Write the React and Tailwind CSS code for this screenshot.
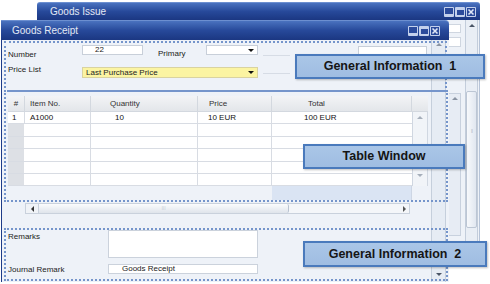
import React from "react";

const TriDown = ({ c = "border-t-[#111]" }) => (
  <div className={`w-0 h-0 border-l-[3px] border-r-[3px] border-t-[3px] border-l-transparent border-r-transparent ${c}`} />
);
const TriUp = ({ c = "border-b-[#8a94a3]" }) => (
  <div className={`w-0 h-0 border-l-[3px] border-r-[3px] border-b-[3px] border-l-transparent border-r-transparent ${c}`} />
);
const TriLeft = () => (
  <div className="w-0 h-0 border-t-[3px] border-b-[3px] border-r-[3px] border-t-transparent border-b-transparent border-r-[#333]" />
);
const TriRight = () => (
  <div className="w-0 h-0 border-t-[3px] border-b-[3px] border-l-[3px] border-t-transparent border-b-transparent border-l-[#555]" />
);

function WinButtons() {
  return (
    <div className="flex gap-[1px]">
      <div className="w-[10px] h-[10px] bg-[#c4d1ec] pt-[1px] px-[1px] pb-[3px] rounded-[1px]">
        <div className="w-full h-full bg-[#2b4b9c]" />
      </div>
      <div className="w-[10px] h-[10px] bg-[#c4d1ec] pt-[3px] px-[1.5px] pb-[1.5px] rounded-[1px]">
        <div className="w-full h-full bg-[#2b4b9c]" />
      </div>
      <div className="w-[10px] h-[10px] bg-[#c4d1ec] rounded-[1px] flex items-center justify-center">
        <svg width="8" height="8" viewBox="0 0 8 8">
          <rect width="8" height="8" fill="#2b4b9c" />
          <path d="M1.5 1.5 L6.5 6.5 M6.5 1.5 L1.5 6.5" stroke="#dfe7f7" strokeWidth="1.6" />
        </svg>
      </div>
    </div>
  );
}

const titleBar =
  "bg-gradient-to-b from-[#4a72bf] via-[#27499a] to-[#1b3782] border-t border-[#6c8fd0]";

function BackWindow() {
  return (
    <div className="absolute left-[37px] top-[2px] w-[443px] h-[240px] flex flex-col">
      <div className={`h-[18px] flex items-center justify-between pl-[13px] pr-[4px] rounded-t-[3px] ${titleBar}`}>
        <span className="text-[10px] leading-none text-[#e3e9f5]">Goods Issue</span>
        <WinButtons />
      </div>
      <div className="flex-1 bg-[#eef2f8] border-r border-[#b7c4d8] flex justify-end gap-[4px] pr-[1px]">
        <div className="w-[40px] flex flex-col items-end pt-[4px]">
          <div className="w-full h-[9px] bg-white border border-[#cfd6e0]" />
          <div className="w-full h-[10px] mt-[4px] bg-white border border-[#cfd6e0]" />
          <div className="w-[13px] flex-1 mt-[46px] mb-[6px] bg-[#e7ecf4] border border-[#c8d1de] flex flex-col items-center pt-[3px]">
            <TriUp />
          </div>
        </div>
        <div className="w-[13px] bg-[#e9eef5] border-x border-[#c3cddb] flex flex-col items-center pt-[4px]">
          <TriUp c="border-b-[#4a5566]" />
          <div className="w-[11px] mt-[64px] h-[137px] rounded-[2px] bg-gradient-to-r from-[#f7f9fc] to-[#e1e7f0] border border-[#bcc6d4] flex flex-col items-center pt-[36px]">
            <div className="text-[6px] leading-none text-[#9aa4b2] tracking-[-1px]">⁞⁞</div>
          </div>
        </div>
      </div>
    </div>
  );
}

const colW = ["w-[17px]", "w-[66px]", "w-[107px]", "w-[74px]", "w-[140px]"];

function Table() {
  const rowH = ["h-[12px]", "h-[13px]", "h-[12px]", "h-[13px]", "h-[12px]", "h-[12px]"];
  return (
    <div className="flex flex-col w-[420px] mt-[18px]">
      <div className="flex h-[16px] bg-gradient-to-b from-[#f3f4f6] to-[#e3e6ea] border-b border-[#d3d8df] text-[8px] leading-none text-[#333]">
        <div className={`${colW[0]} border-r border-[#d3d8df] flex items-center justify-center`}>#</div>
        <div className={`${colW[1]} border-r border-[#d3d8df] flex items-center pl-[5px]`}>Item No.</div>
        <div className={`${colW[2]} border-r border-[#d3d8df] flex items-center pl-[19px]`}>Quantity</div>
        <div className={`${colW[3]} border-r border-[#d3d8df] flex items-center pl-[11px]`}>Price</div>
        <div className={`${colW[4]} border-r border-[#d3d8df] flex items-center pl-[36px]`}>Total</div>
        <div className="w-[16px]" />
      </div>
      <div className="flex">
        <div className="w-[404px] flex flex-col">
          {rowH.map((h, i) => (
            <div key={i} className={`flex ${h} border-b border-[#d8dce3] bg-white text-[8px] leading-none text-[#111]`}>
              <div className={`${colW[0]} border-r border-[#d8dce3] flex items-center pl-[4px] ${i === 0 ? "bg-white" : "bg-[#dde0e5] border-r-white"}`}>
                {i === 0 ? "1" : ""}
              </div>
              <div className={`${colW[1]} border-r border-[#d8dce3] flex items-center pl-[5px]`}>{i === 0 ? "A1000" : ""}</div>
              <div className={`${colW[2]} border-r border-[#d8dce3] flex items-center pl-[24px]`}>{i === 0 ? "10" : ""}</div>
              <div className={`${colW[3]} border-r border-[#d8dce3] flex items-center pl-[10px]`}>{i === 0 ? "10 EUR" : ""}</div>
              <div className={`${colW[4]} flex items-center pl-[32px]`}>{i === 0 ? "100 EUR" : ""}</div>
            </div>
          ))}
          <div className="h-[14px] flex">
            <div className="w-[264px]" />
            <div className="w-[140px] bg-[#dae4f3] border-r border-[#cdd6e4]" />
          </div>
        </div>
        <div className="w-[16px] h-[74px] bg-[#f1f4f8] border-x border-[#d0d7e1] flex flex-col items-center justify-between pt-[4px] pb-[9px]">
          <TriUp c="border-b-[#a5aeba]" />
          <TriDown c="border-t-[#a5aeba]" />
        </div>
      </div>
    </div>
  );
}

function HScroll() {
  return (
    <div className="ml-[17px] mt-[3px] w-[385px] h-[11px] flex bg-[#f4f6f9] border border-[#c9d1dc]">
      <div className="w-[13px] flex items-center justify-center border-r border-[#c9d1dc] bg-[#f0f3f7]">
        <TriLeft />
      </div>
      <div className="w-[250px] bg-gradient-to-b from-[#fbfcfd] to-[#dfe4eb] border-r border-[#b9c3d1] rounded-r-[2px] flex items-center justify-center">
        <span className="text-[5px] leading-none text-[#a0a8b5]">⁞⁞⁞</span>
      </div>
      <div className="flex-1 flex items-center justify-end pr-[3px]">
        <TriRight />
      </div>
    </div>
  );
}

function FrontWindow() {
  return (
    <div className="absolute left-[1px] top-[20px] w-[448px] h-[262px] flex flex-col">
      <div className={`h-[20px] flex items-center justify-between pl-[11px] pr-[9px] rounded-tr-[4px] ${titleBar}`}>
        <span className="text-[10px] leading-none text-[#e3e9f5]">Goods Receipt</span>
        <WinButtons />
      </div>
      <div className="flex-1 flex bg-[#eef2f8] border-l border-[#1e3c88]">
        <div className="w-[429px] flex flex-col pl-[6px] pt-[5px] text-[8px] leading-[10px] text-[#222]">
          <div className="flex h-[13px]">
            <div className="w-[74px] pt-[5px]">Number</div>
            <div className="w-[61px] h-[10px] bg-white border border-[#c8cfd9] pl-[12px] leading-[8px]">22</div>
            <div className="w-[48px] ml-[15px] pt-[4px]">Primary</div>
            <div className="w-[52px] h-[10px] bg-white border border-[#c8cfd9] flex items-center justify-end pr-[3px]">
              <TriDown />
            </div>
            <div className="w-[27px] h-[1px] ml-[5px] mt-[10px] bg-[#d6dce5]" />
            <div className="w-[69px] h-[9px] ml-[68px] mt-[1px] bg-white border border-[#c8cfd9]" />
          </div>
          <div className="flex h-[11px] mt-[9px]">
            <div className="w-[74px] -mt-[2px]">Price List</div>
            <div className="w-[176px] h-[11px] bg-[#fbf4a2] border border-[#d9d3a0] flex items-center justify-between pl-[3px] pr-[3px]">
              <span className="leading-none">Last Purchase Price</span>
              <TriDown />
            </div>
            <div className="w-[27px] h-[1px] ml-[5px] mt-[6px] bg-[#d6dce5]" />
          </div>
          <Table />
          <HScroll />
          <div className="flex mt-[16px]">
            <div className="w-[100px] pt-[2px]">Remarks</div>
            <div className="w-[150px] h-[28px] bg-white border border-[#cbd2dc]" />
          </div>
          <div className="flex mt-[6px] h-[10px]">
            <div className="w-[100px] pt-[1px]">Journal Remark</div>
            <div className="w-[150px] h-[10px] bg-white border border-[#cbd2dc] pl-[13px] leading-[8px]">Goods Receipt</div>
          </div>
        </div>
        <div className="w-[15px] bg-[#e6ecf4] border-x border-[#c5cfdc] flex flex-col items-center justify-between pt-[3px] pb-[6px]">
          <TriUp />
          <TriDown c="border-t-[#4a5566]" />
        </div>
        <div className="flex-1 bg-[#eef2f8]" />
      </div>
    </div>
  );
}

function Callout({ className, children }) {
  return (
    <div
      className={`absolute flex items-center justify-center bg-gradient-to-b from-[#aac6e7] to-[#9fbde2] border-2 border-[#4a7abc] shadow-[1px_1px_2px_rgba(0,0,0,0.25)] text-[12.5px] font-bold text-[#151515] whitespace-pre leading-none ${className}`}
    >
      {children}
    </div>
  );
}

export default function App() {
  return (
    <div className="relative w-[490px] h-[284px] bg-white overflow-hidden font-['Liberation_Sans',Arial,sans-serif]">
      <BackWindow />
      <FrontWindow />
      <div className="absolute left-[4px] top-[41px] w-[443px] h-[51px] border-2 border-dotted border-[#7595cb]" />
      <div className="absolute left-[4px] top-[90px] w-[444px] h-[112px] border-2 border-dotted border-[#7595cb]" />
      <div className="absolute left-[4px] top-[228px] w-[444px] h-[53px] border-2 border-dotted border-[#7595cb]" />
      <Callout className="left-[295px] top-[54px] w-[190px] h-[25px]">{"General Information  1"}</Callout>
      <Callout className="left-[303px] top-[144px] w-[162px] h-[25px]">Table Window</Callout>
      <Callout className="left-[303px] top-[241px] w-[184px] h-[26px]">{"General Information  2"}</Callout>
    </div>
  );
}
